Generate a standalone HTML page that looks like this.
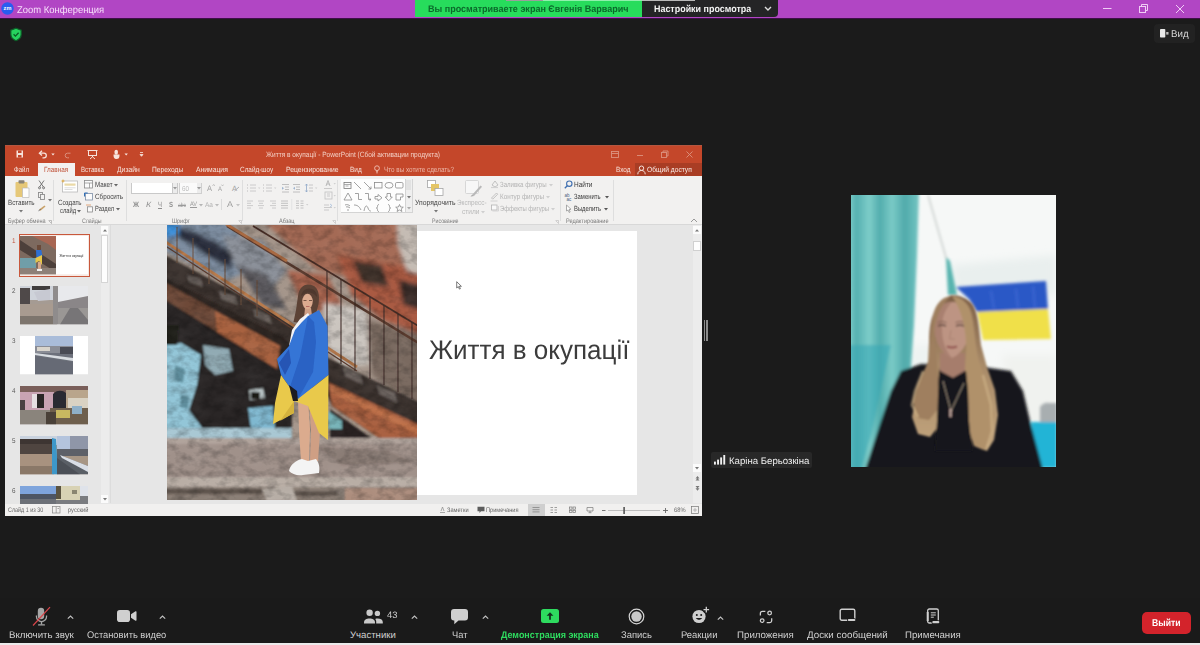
<!DOCTYPE html>
<html lang="ru"><head><meta charset="utf-8"><title>Zoom Конференция</title>
<style>
*{box-sizing:border-box;margin:0;padding:0}
html,body{width:1200px;height:645px;overflow:hidden;background:#1b1b1b;font-family:"Liberation Sans",sans-serif}
#root{position:relative;width:1200px;height:645px;overflow:hidden;background:#1b1b1b}
.a{position:absolute;display:block}
.x{position:absolute;white-space:nowrap;transform-origin:0 50%;text-rendering:geometricPrecision}
</style></head><body>
<div id="root">
<!-- p1_zoom -->
<div class="a" style="left:0px;top:0px;width:1200.0px;height:17.5px;background:#b146c4;"></div>
<div class="a" style="left:0px;top:17.5px;width:1200.0px;height:1.0px;background:#3d0f47;"></div>
<svg class="a" style="left:1px;top:2px;" width="13" height="13" viewBox="0 0 13 13"><circle cx="6.5" cy="6.5" r="6.2" fill="#2a5cf0"/><text x="6.5" y="8.4" font-size="5.6" font-weight="bold" fill="#fff" text-anchor="middle" font-family="Liberation Sans, sans-serif">zm</text></svg>
<div class="x" style="left:17.3px;top:5px;font-size:10px;line-height:12.0px;color:#f7dffb;transform:scaleX(0.943);">Zoom Конференция</div>
<svg class="a" style="left:1095px;top:0px;" width="100" height="18" viewBox="0 0 100 18"><g fill="none" stroke="#f0cdf6" stroke-width="1"><path d="M8 8.5h8.5"/><rect x="44.5" y="6.5" width="6" height="6"/><path d="M46.5 6.5v-2h6v6h-2"/><path d="M81 5l8 8M89 5l-8 8"/></g></svg>
<div class="a" style="left:415px;top:0px;width:227.0px;height:16.6px;background:#27dc5c;"></div>
<div class="a" style="left:506px;top:0px;width:37.0px;height:1.0px;background:#9a9f9c;"></div>
<div class="a" style="left:543px;top:0px;width:99.0px;height:1.0px;background:#8ff0ac;"></div>
<div class="x" style="left:428.3px;top:4px;font-size:9.6px;line-height:11.5px;color:#0b6a2b;transform:scaleX(0.940);font-weight:bold;">Вы просматриваете экран Євгенія Варварич</div>
<div class="a" style="left:642px;top:0px;width:136.0px;height:16.5px;background:#242426;border-radius:0 0 4px 0;"></div>
<div class="a" style="left:642px;top:0px;width:53.0px;height:1.0px;background:#b9b9b9;"></div>
<div class="x" style="left:654.0px;top:4px;font-size:9.6px;line-height:11.5px;color:#f4f4f4;transform:scaleX(0.930);font-weight:bold;">Настройки просмотра</div>
<svg class="a" style="left:764px;top:6px;" width="8" height="6" viewBox="0 0 8 6"><path d="M1 1l3 3 3-3" fill="none" stroke="#ddd" stroke-width="1.4"/></svg>
<svg class="a" style="left:8.5px;top:26.5px;" width="14" height="15" viewBox="0 0 14 15"><path d="M7 1.2 L12.2 3.2 V7.2 C12.2 10.3 10 12.5 7 13.7 C4 12.5 1.8 10.3 1.8 7.2 V3.2 Z" fill="#26d25e" stroke="#0f5d29" stroke-width="1.2"/><path d="M4.6 7.3l1.8 1.8 3.2-3.4" fill="none" stroke="#0c5a26" stroke-width="1.3"/></svg>
<div class="a" style="left:1154px;top:24px;width:41.0px;height:19.0px;background:#222222;border-radius:4px;"></div>
<svg class="a" style="left:1160px;top:29px;" width="10" height="9" viewBox="0 0 10 9"><rect x="0" y="0" width="5.3" height="8.5" rx="0.8" fill="#e8e8e8"/><rect x="6.2" y="3" width="2.3" height="2.6" fill="#bdbdbd"/></svg>
<div class="x" style="left:1171.0px;top:29px;font-size:9.8px;line-height:11.8px;color:#dadada;transform:scaleX(0.992);">Вид</div>
<div class="a" style="left:704px;top:320px;width:1.3px;height:21.0px;background:#8c8c8c;"></div>
<div class="a" style="left:706.3px;top:320px;width:1.3px;height:21.0px;background:#8c8c8c;"></div>
<div class="a" style="left:711.3px;top:452px;width:100.7px;height:16.3px;background:#282828;border-radius:2px;"></div>
<svg class="a" style="left:713.8px;top:455px;" width="12" height="10" viewBox="0 0 12 10"><g fill="#f0f0f0"><rect x="0" y="6.6" width="1.9" height="3"/><rect x="3.1" y="4.6" width="1.9" height="5"/><rect x="6.2" y="2.4" width="1.9" height="7.2"/><rect x="9.3" y="0" width="1.9" height="9.6"/></g></svg>
<div class="x" style="left:729.3px;top:456px;font-size:9.6px;line-height:11.5px;color:#efefef;transform:scaleX(1.002);">Каріна Берьозкіна</div>
<!-- p2_ppt -->
<div class="a" style="left:5px;top:145px;width:697.0px;height:371.0px;background:#e6e6e6;"></div>
<div class="a" style="left:5px;top:145px;width:697.0px;height:31.0px;background:#c4472a;"></div>
<div class="a" style="left:5px;top:145px;width:697.0px;height:1.0px;background:#b5563f;"></div>
<svg class="a" style="left:15px;top:149px;" width="130" height="11" viewBox="0 0 130 11"><g fill="none" stroke="#f7e3dc" stroke-width="1"><rect x="1.5" y="1.5" width="6.5" height="7" fill="#f7e3dc" stroke="none"/><rect x="3" y="1.5" width="3.5" height="2.5" fill="#c4472a" stroke="none"/><rect x="3" y="6" width="3.5" height="2.5" fill="#c4472a" stroke="none"/><path d="M25 4.2h4a2.2 2.2 0 0 1 0 4.6h-1.5" stroke-width="1.3"/><path d="M27 1.8L24.4 4.2 27 6.6" stroke-width="1.3"/><path d="M55.500 4.200h-3a2.200 2.200 0 0 0 0 4.600h1.500" stroke="#db8f7c"/><rect x="73.5" y="1.5" width="8" height="5"/><path d="M72.5 1.5h10M77.5 6.5v1.5M75 10l2.5-2.2L80 10"/><rect x="99.5" y="0.8" width="3.4" height="5" rx="1.7" fill="#f7e3dc" stroke="none"/><path d="M98.5 5.5c0 3.5 1 4.5 3 4.5s3-1 3-3.5v-1z" fill="#f7e3dc" stroke="none"/></g><path d="M36.300 4.500h3.400l-1.700 1.900zM109.500 4.500h3.400l-1.700 1.900z" fill="#f7e3dc"/><path d="M125 3.5h3M125 5.5h3l-1.5 1.8z" stroke="#f7e3dc" stroke-width="0.8" fill="#f7e3dc"/></svg>
<div class="x" style="left:266.0px;top:150px;font-size:7.5px;line-height:9.0px;color:#f3cfc4;transform:scaleX(0.873);">Життя в окупації - PowerPoint (Сбой активации продукта)</div>
<svg class="a" style="left:608px;top:149px;" width="90" height="11" viewBox="0 0 90 11"><g fill="none" stroke="#dc937f" stroke-width="0.9"><rect x="3.5" y="2.5" width="7" height="6"/><path d="M3.5 4.5h7"/><path d="M29 6.5h6"/><rect x="53.5" y="3.5" width="5" height="5"/><path d="M55 3.5V2h5v5h-1.5"/><path d="M78.5 2.5l6 6M84.5 2.5l-6 6"/></g></svg>
<div class="x" style="left:13.5px;top:165px;font-size:7.5px;line-height:9.0px;color:#f7e3dc;transform:scaleX(0.813);">Файл</div>
<div class="a" style="left:38.4px;top:163px;width:36.2px;height:13.5px;background:#f3f1f0;"></div>
<div class="x" style="left:44.4px;top:165px;font-size:7.5px;line-height:9.0px;color:#c0533a;transform:scaleX(0.848);">Главная</div>
<div class="x" style="left:81.0px;top:165px;font-size:7.5px;line-height:9.0px;color:#f7e3dc;transform:scaleX(0.818);">Вставка</div>
<div class="x" style="left:117.0px;top:165px;font-size:7.5px;line-height:9.0px;color:#f7e3dc;transform:scaleX(0.904);">Дизайн</div>
<div class="x" style="left:152.0px;top:165px;font-size:7.5px;line-height:9.0px;color:#f7e3dc;transform:scaleX(0.887);">Переходы</div>
<div class="x" style="left:196.0px;top:165px;font-size:7.5px;line-height:9.0px;color:#f7e3dc;transform:scaleX(0.903);">Анимация</div>
<div class="x" style="left:240.0px;top:165px;font-size:7.5px;line-height:9.0px;color:#f7e3dc;transform:scaleX(0.854);">Слайд-шоу</div>
<div class="x" style="left:285.5px;top:165px;font-size:7.5px;line-height:9.0px;color:#f7e3dc;transform:scaleX(0.906);">Рецензирование</div>
<div class="x" style="left:349.5px;top:165px;font-size:7.5px;line-height:9.0px;color:#f7e3dc;transform:scaleX(0.862);">Вид</div>
<svg class="a" style="left:374px;top:164.5px;" width="6" height="10" viewBox="0 0 6 10"><circle cx="3" cy="3.2" r="2.4" fill="none" stroke="#f0c2b5" stroke-width="0.9"/><path d="M2 6.3h2M2.2 7.8h1.6" stroke="#f0c2b5" stroke-width="0.9"/></svg>
<div class="x" style="left:383.6px;top:165px;font-size:7.5px;line-height:9.0px;color:#ecb5a6;transform:scaleX(0.844);">Что вы хотите сделать?</div>
<div class="x" style="left:616.0px;top:165px;font-size:7.5px;line-height:9.0px;color:#f7e3dc;transform:scaleX(0.855);">Вход</div>
<div class="a" style="left:635px;top:163px;width:67.0px;height:13.0px;background:#a93d24;"></div>
<svg class="a" style="left:637px;top:164.5px;" width="10" height="10" viewBox="0 0 10 10"><circle cx="4.5" cy="3.2" r="2.2" fill="none" stroke="#f7e3dc" stroke-width="1"/><path d="M0.8 9.3c0-2.6 1.6-3.8 3.7-3.8s3.7 1.2 3.7 3.8" fill="none" stroke="#f7e3dc" stroke-width="1"/></svg>
<div class="x" style="left:647.0px;top:165px;font-size:7.5px;line-height:9.0px;color:#fbeee9;transform:scaleX(0.889);">Общий доступ</div>
<div class="a" style="left:5px;top:176px;width:697.0px;height:48.4px;background:#f2f1f0;"></div>
<div class="a" style="left:5px;top:224.4px;width:697.0px;height:0.8px;background:#d8d8d8;"></div>
<div class="a" style="left:52.5px;top:180px;width:0.7px;height:41.0px;background:#dedede;"></div>
<div class="a" style="left:126px;top:180px;width:0.7px;height:41.0px;background:#dedede;"></div>
<div class="a" style="left:242px;top:180px;width:0.7px;height:41.0px;background:#dedede;"></div>
<div class="a" style="left:337px;top:180px;width:0.7px;height:41.0px;background:#dedede;"></div>
<div class="a" style="left:560px;top:180px;width:0.7px;height:41.0px;background:#dedede;"></div>
<div class="a" style="left:613px;top:180px;width:0.7px;height:41.0px;background:#dedede;"></div>
<svg class="a" style="left:14px;top:178.5px;" width="18" height="20" viewBox="0 0 18 20"><rect x="1.5" y="3" width="12" height="15" rx="1" fill="#e6c878"/><rect x="4.5" y="1.2" width="6" height="3.2" rx="0.8" fill="#8a8478"/><path d="M8.5 9h6.5v9.5H8.5z" fill="#fdfdfd" stroke="#b9b9b9" stroke-width="0.7"/></svg>
<div class="x" style="left:8.0px;top:198px;font-size:7.5px;line-height:9.0px;color:#444444;transform:scaleX(0.834);">Вставить</div>
<svg class="a" style="left:19.3px;top:209.5px;" width="4" height="3" viewBox="0 0 4 3"><path d="M0 0h4L2 2.4z" fill="#777"/></svg>
<svg class="a" style="left:37px;top:179px;" width="10" height="34" viewBox="0 0 10 34"><g fill="none" stroke="#6a6a6a" stroke-width="0.9"><path d="M2 1.5l4.5 6.5M7 1.5L2.5 8"/><circle cx="2.5" cy="8.8" r="1"/><circle cx="6.6" cy="8.8" r="1"/><rect x="1.5" y="13.5" width="4" height="5" stroke="#8d8d8d"/><rect x="3.5" y="15.5" width="4" height="5" fill="#f2f1f0" stroke="#8d8d8d"/></g><path d="M2 30.5l5.5-4 1 1-5 4.2z" fill="#c9a26b"/><path d="M1.5 31.8l2.3-1.5" stroke="#777" stroke-width="1"/></svg>
<svg class="a" style="left:47.5px;top:198.5px;" width="4" height="3" viewBox="0 0 4 3"><path d="M0 0h4L2 2.4z" fill="#777"/></svg>
<div class="x" style="left:7.5px;top:218px;font-size:6.4px;line-height:7.7px;color:#7a7a7a;transform:scaleX(0.866);">Буфер обмена</div>
<svg class="a" style="left:47.5px;top:219.5px;" width="4" height="4" viewBox="0 0 4 4"><path d="M0.5 0.5h3v3M3.5 3.5L1 1" fill="none" stroke="#999" stroke-width="0.6"/></svg>
<svg class="a" style="left:61px;top:179px;" width="18" height="14" viewBox="0 0 18 14"><rect x="1.5" y="2" width="15" height="11" fill="#fff" stroke="#b8b8b8" stroke-width="0.8"/><rect x="3.5" y="4.5" width="11" height="2.2" fill="#ead9a6"/><path d="M3.5 8.8h11M3.5 10.5h8" stroke="#cfcfcf" stroke-width="0.7"/><path d="M2 0.5v3M0.5 2h3" stroke="#e1a83a" stroke-width="0.9"/></svg>
<div class="x" style="left:58.0px;top:198px;font-size:7.5px;line-height:9.0px;color:#444444;transform:scaleX(0.824);">Создать</div>
<div class="x" style="left:59.5px;top:206px;font-size:7.5px;line-height:9.0px;color:#444444;transform:scaleX(0.767);">слайд</div>
<svg class="a" style="left:77px;top:209.8px;" width="4" height="3" viewBox="0 0 4 3"><path d="M0 0h4L2 2.4z" fill="#666"/></svg>
<svg class="a" style="left:84px;top:179.5px;" width="9" height="9" viewBox="0 0 9 9"><rect x="0.5" y="0.5" width="8" height="7.5" fill="#fbfbfb" stroke="#8b8b8b" stroke-width="0.8"/><path d="M0.5 3h8M5.5 3v5" stroke="#8b8b8b" stroke-width="0.7"/></svg>
<div class="x" style="left:94.5px;top:180px;font-size:7.5px;line-height:9.0px;color:#444444;transform:scaleX(0.824);">Макет</div>
<svg class="a" style="left:114px;top:183.5px;" width="4" height="3" viewBox="0 0 4 3"><path d="M0 0h4L2 2.4z" fill="#666"/></svg>
<svg class="a" style="left:84px;top:191.5px;" width="9" height="9" viewBox="0 0 9 9"><rect x="1.5" y="1.5" width="7" height="6.5" fill="#fbfbfb" stroke="#7d8ea6" stroke-width="0.8"/><path d="M0.5 4.5V1h3.2" fill="none" stroke="#2f6fb8" stroke-width="1"/></svg>
<div class="x" style="left:94.5px;top:192px;font-size:7.5px;line-height:9.0px;color:#444444;transform:scaleX(0.840);">Сбросить</div>
<svg class="a" style="left:86px;top:203.5px;" width="8" height="9" viewBox="0 0 8 9"><path d="M0 1h5" stroke="#e0a070" stroke-width="0.9"/><rect x="1.5" y="2.8" width="5" height="5.2" fill="#fbfbfb" stroke="#8b8b8b" stroke-width="0.8"/></svg>
<div class="x" style="left:94.5px;top:204px;font-size:7.5px;line-height:9.0px;color:#444444;transform:scaleX(0.766);">Раздел</div>
<svg class="a" style="left:116px;top:207.6px;" width="4" height="3" viewBox="0 0 4 3"><path d="M0 0h4L2 2.4z" fill="#666"/></svg>
<div class="x" style="left:82.0px;top:218px;font-size:6.4px;line-height:7.7px;color:#7a7a7a;transform:scaleX(0.822);">Слайды</div>
<div class="a" style="left:131px;top:182.5px;width:46.5px;height:11.0px;background:#c9c9c9;"></div>
<div class="a" style="left:131.7px;top:183.2px;width:40.8px;height:9.6px;background:#ffffff;"></div>
<div class="a" style="left:172.5px;top:183.2px;width:4.3px;height:9.6px;background:#ececec;"></div>
<svg class="a" style="left:173px;top:187px;" width="4" height="3" viewBox="0 0 4 3"><path d="M0 0h4L2 2.4z" fill="#9a9a9a"/></svg>
<div class="a" style="left:179px;top:182.5px;width:22.5px;height:11.0px;background:#cfcfcf;"></div>
<div class="a" style="left:179.7px;top:183.2px;width:17.3px;height:9.6px;background:#fafafa;"></div>
<div class="a" style="left:197px;top:183.2px;width:3.8px;height:9.6px;background:#ececec;"></div>
<svg class="a" style="left:197.2px;top:187px;" width="4" height="3" viewBox="0 0 4 3"><path d="M0 0h4L2 2.4z" fill="#9a9a9a"/></svg>
<div class="x" style="left:181.5px;top:186px;font-size:7px;line-height:8.4px;color:#bdbdbd;transform:scaleX(0.899);">60</div>
<div class="x" style="left:206.5px;top:184px;font-size:8px;line-height:9.6px;color:#a3a3a3;transform:scaleX(0.937);">A</div>
<div class="x" style="left:217.5px;top:186px;font-size:6.6px;line-height:7.9px;color:#a3a3a3;transform:scaleX(0.905);">A</div>
<svg class="a" style="left:211.5px;top:183px;" width="12" height="5" viewBox="0 0 12 5"><path d="M0.5 3l1.2-1.6L2.9 3M9.5 1.6l1 1.4 1-1.4" fill="none" stroke="#a8a8a8" stroke-width="0.6"/></svg>
<div class="x" style="left:232.0px;top:184px;font-size:7.5px;line-height:9.0px;color:#a3a3a3;transform:scaleX(1.000);">A</div>
<svg class="a" style="left:234px;top:186px;" width="6" height="6" viewBox="0 0 6 6"><path d="M0.5 5l4.5-4" stroke="#b0b0b0" stroke-width="1"/></svg>
<div class="x" style="left:133.0px;top:200px;font-size:7.5px;line-height:9.0px;color:#8f8f8f;transform:scaleX(0.885);font-weight:bold;">Ж</div>
<div class="x" style="left:145.5px;top:200px;font-size:7.5px;line-height:9.0px;color:#8f8f8f;transform:scaleX(1.144);font-style:italic;">К</div>
<div class="x" style="left:157.5px;top:200px;font-size:7.5px;line-height:9.0px;color:#8f8f8f;transform:scaleX(0.800);text-decoration:underline;">Ч</div>
<div class="x" style="left:168.5px;top:200px;font-size:7.5px;line-height:9.0px;color:#8f8f8f;transform:scaleX(0.800);font-weight:bold;">S</div>
<div class="x" style="left:177.5px;top:202px;font-size:6.2px;line-height:7.4px;color:#9a9a9a;transform:scaleX(0.794);text-decoration:line-through;">abc</div>
<div class="x" style="left:189.5px;top:201px;font-size:6.4px;line-height:7.7px;color:#9a9a9a;transform:scaleX(0.872);text-decoration:underline;">AV</div>
<svg class="a" style="left:198.5px;top:204px;" width="4" height="3" viewBox="0 0 4 3"><path d="M0 0h4L2 2.4z" fill="#b5b5b5"/></svg>
<div class="x" style="left:205.0px;top:202px;font-size:7px;line-height:8.4px;color:#b0b0b0;transform:scaleX(0.934);">Aa</div>
<svg class="a" style="left:215px;top:204px;" width="4" height="3" viewBox="0 0 4 3"><path d="M0 0h4L2 2.4z" fill="#bbb"/></svg>
<div class="a" style="left:221.3px;top:199px;width:0.7px;height:11.0px;background:#dadada;"></div>
<div class="x" style="left:226.5px;top:199px;font-size:8.5px;line-height:10.2px;color:#9c9c9c;transform:scaleX(1.058);">A</div>
<svg class="a" style="left:236px;top:204px;" width="4" height="3" viewBox="0 0 4 3"><path d="M0 0h4L2 2.4z" fill="#c4c4c4"/></svg>
<div class="x" style="left:172.0px;top:218px;font-size:6.4px;line-height:7.7px;color:#7a7a7a;transform:scaleX(0.858);">Шрифт</div>
<svg class="a" style="left:237.5px;top:219.5px;" width="4" height="4" viewBox="0 0 4 4"><path d="M0.5 0.5h3v3M3.5 3.5L1 1" fill="none" stroke="#bbb" stroke-width="0.6"/></svg>
<svg class="a" style="left:245px;top:180px;" width="76" height="32" viewBox="0 0 76 32"><g fill="none" stroke="#c2c2c2" stroke-width="0.8"><path d="M5 5h6M5 8h6M5 11h6"/><path d="M2 5h1M2 8h1M2 11h1" stroke="#b0b0b0"/><path d="M21 5h6M21 8h6M21 11h6"/><path d="M18 5h1M18 8h1M18 11h1" stroke="#b0b0b0"/><path d="M13 7.5h2.4l-1.2 1.4zM29 7.5h2.4l-1.2 1.4z" fill="#cfcfcf" stroke="none"/><path d="M37 4.5h7M40 7h4M40 9.500h4M37 12h7" stroke="#b3b3b3"/><path d="M39 8.3l-2-1.5v3z" fill="#9fb4cf" stroke="none"/><path d="M48 4.5h7M51 7h4M51 9.500h4M48 12h7" stroke="#b3b3b3"/><path d="M48 8.3l2-1.500v3z" fill="#9fb4cf" stroke="none"/><path d="M64 5h4M64 8h4M64 11h4" stroke="#bdbdbd"/><path d="M61.500 4v8M60.300 5.500l1.200-1.500 1.200 1.500M60.300 10.500l1.200 1.500 1.200-1.500" stroke="#8fa8c8"/><path d="M70 7.500h2.400l-1.200 1.400z" fill="#cfcfcf" stroke="none"/><path d="M2 21h6M2 23.300h4M2 25.600h6M2 28h4"/><path d="M13 21h6M14 23.300h4M13 25.600h6M14 28h4"/><path d="M25 21h6M27 23.300h4M25 25.600h6M27 28h4"/><path d="M36 21h7M36 23.300h7M36 25.600h7M36 28h7" stroke="#b5b5b5"/><path d="M51 21h3M51 23.300h3M51 25.600h3M51 28h3M55.500 21h3M55.500 23.300h3M55.500 25.600h3M55.500 28h3" stroke="#b8b8b8"/><path d="M61 24h2.400l-1.200 1.400z" fill="#cfcfcf" stroke="none"/></g><path d="M46.700 19v11" stroke="#dcdcdc" stroke-width="0.7"/></svg>
<svg class="a" style="left:323px;top:179px;" width="14" height="34" viewBox="0 0 14 34"><g fill="none" stroke="#c0c0c0" stroke-width="0.8"><path d="M3 7l2-5.500L7 7M3.700 5h2.600" stroke="#adadad"/><path d="M1 9.500h8"/><rect x="2" y="13" width="7" height="7"/><path d="M4 15h3M4 17h3"/><path d="M1 26h5M1 28.500h8M1 31h5"/><path d="M7 25l2 1.500-2 1.500" stroke="#aac0dc"/></g><path d="M10.500 4h2.400l-1.200 1.400zM10.500 16h2.400l-1.200 1.400zM10.500 28h2.400l-1.200 1.400z" fill="#cfcfcf"/></svg>
<div class="x" style="left:279.0px;top:218px;font-size:6.4px;line-height:7.7px;color:#7a7a7a;transform:scaleX(0.867);">Абзац</div>
<svg class="a" style="left:331.5px;top:219.5px;" width="4" height="4" viewBox="0 0 4 4"><path d="M0.500 0.500h3v3M3.500 3.500L1 1" fill="none" stroke="#bbb" stroke-width="0.600"/></svg>
<div class="a" style="left:340.5px;top:178.5px;width:72.0px;height:34.5px;background:#d4d4d4;"></div>
<div class="a" style="left:341.2px;top:179.2px;width:64.3px;height:33.1px;background:#fdfdfd;"></div>
<div class="a" style="left:405.5px;top:179.2px;width:6.3px;height:33.1px;background:#efefef;"></div>
<div class="a" style="left:406px;top:180px;width:5.3px;height:10.0px;background:#e2e2e2;"></div>
<svg class="a" style="left:341.5px;top:179.5px;" width="64" height="33" viewBox="0 0 64 33"><g fill="none" stroke="#8a8a8a" stroke-width="0.800"><rect x="2" y="2.500" width="7" height="6" stroke="#7a7a7a"/><path d="M2 4.500h7M3.500 6h3" stroke="#9a9a9a"/><path d="M12 2l7 7"/><path d="M22 2l7 7M29 9v-2.500M29 9h-2.500"/><rect x="32.500" y="2.500" width="7.500" height="5.500"/><ellipse cx="47" cy="5.300" rx="4" ry="2.900"/><rect x="53.500" y="2.500" width="7.500" height="5.500" rx="1.200"/><path d="M2 20l4-7 4 7z"/><path d="M13 13.500h3.500v6H20"/><path d="M23 13.500h3.500v6H29M29 19.500l-1.500-1.200M29 19.500l-1.500 1.200"/><path d="M33 16.500h3v-2l4 3.300-4 3.200v-2h-3z"/><path d="M45 13.500h3.500v3.500h1.800l-3.600 3.800-3.500-3.800H45z"/><path d="M54 14h7v3h-2.500v3H54z"/><path d="M3 25c2-1 4 0 5 1M4 27c1-0.500 3 0 4 1M6 29v2"/><path d="M12 25c3 0 5 1 7 5"/><path d="M22 31c1-6 3-6 4-3s2 3 3 3"/><path d="M37 24.500c-1.200 0-1.500 0.800-1.500 2s-0.500 1.500-1.200 1.500c0.700 0 1.200 0.400 1.200 1.600s0.300 2 1.500 2"/><path d="M46 24.500c1.200 0 1.500 0.800 1.500 2s0.500 1.500 1.200 1.500c-0.700 0-1.200 0.400-1.200 1.600s-0.300 2-1.500 2"/><path d="M57.500 24.500l1.100 2.500 2.700 0.200-2.100 1.700 0.700 2.600-2.400-1.500-2.400 1.500 0.700-2.600-2.100-1.700 2.700-0.200z"/></g></svg>
<svg class="a" style="left:407px;top:195.5px;" width="4" height="3" viewBox="0 0 4 3"><path d="M0 0h4L2 2.4z" fill="#777"/></svg>
<svg class="a" style="left:407px;top:206.5px;" width="4" height="3" viewBox="0 0 4 3"><path d="M0 0h4L2 2.4z" fill="#aaa"/></svg>
<svg class="a" style="left:426px;top:179px;" width="18" height="18" viewBox="0 0 18 18"><rect x="1.500" y="1.500" width="8" height="7" fill="#fff" stroke="#a5a5a5" stroke-width="0.800"/><rect x="5" y="5" width="8" height="7" fill="#e4c566"/><rect x="9" y="9.500" width="8" height="7" fill="#fff" stroke="#a5a5a5" stroke-width="0.800"/></svg>
<div class="x" style="left:415.0px;top:198px;font-size:7.5px;line-height:9.0px;color:#444444;transform:scaleX(0.907);">Упорядочить</div>
<svg class="a" style="left:433.5px;top:210px;" width="4" height="3" viewBox="0 0 4 3"><path d="M0 0h4L2 2.4z" fill="#777"/></svg>
<svg class="a" style="left:464px;top:179px;" width="20" height="19" viewBox="0 0 20 19"><rect x="1.500" y="1.500" width="13" height="13" rx="1" fill="#f7f7f7" stroke="#cfcfcf" stroke-width="0.800"/><path d="M8 16l8.500-9.500 1.500 1.300L10 17z" fill="#b9b9b9"/><path d="M6.500 17.500l1.500-1.500 2 1z" fill="#9a9a9a"/></svg>
<div class="x" style="left:457.0px;top:198px;font-size:7.5px;line-height:9.0px;color:#b9b9b9;transform:scaleX(0.845);">Экспресс-</div>
<div class="x" style="left:461.5px;top:207px;font-size:7.5px;line-height:9.0px;color:#b9b9b9;transform:scaleX(0.878);">стили</div>
<svg class="a" style="left:481px;top:210.5px;" width="4" height="3" viewBox="0 0 4 3"><path d="M0 0h4L2 2.4z" fill="#cfcfcf"/></svg>
<svg class="a" style="left:490px;top:179px;" width="9" height="34" viewBox="0 0 9 34"><g fill="none" stroke="#b5b5b5" stroke-width="0.800"><path d="M2 6l3-4 3 4-3 2z"/><path d="M1 8.500h7" stroke="#d2d2d2" stroke-width="1.200"/><path d="M1.500 19l5-5 1.200 1.200-5 5z"/><path d="M0.500 22h7" stroke="#d2d2d2" stroke-width="1"/><rect x="1.500" y="26" width="5.500" height="5" fill="#f9f9f9"/><path d="M2.500 32h6v-5" stroke="#cfcfcf"/></g></svg>
<div class="x" style="left:500.0px;top:180px;font-size:7.5px;line-height:9.0px;color:#b3b3b3;transform:scaleX(0.812);">Заливка фигуры</div>
<svg class="a" style="left:548.5px;top:183.5px;" width="4" height="3" viewBox="0 0 4 3"><path d="M0 0h4L2 2.4z" fill="#cfcfcf"/></svg>
<div class="x" style="left:500.0px;top:192px;font-size:7.5px;line-height:9.0px;color:#b3b3b3;transform:scaleX(0.839);">Контур фигуры</div>
<svg class="a" style="left:546px;top:195.5px;" width="4" height="3" viewBox="0 0 4 3"><path d="M0 0h4L2 2.4z" fill="#cfcfcf"/></svg>
<div class="x" style="left:500.0px;top:204px;font-size:7.5px;line-height:9.0px;color:#b3b3b3;transform:scaleX(0.784);">Эффекты фигуры</div>
<svg class="a" style="left:551px;top:207.5px;" width="4" height="3" viewBox="0 0 4 3"><path d="M0 0h4L2 2.4z" fill="#cfcfcf"/></svg>
<div class="x" style="left:432.0px;top:218px;font-size:6.4px;line-height:7.7px;color:#7a7a7a;transform:scaleX(0.825);">Рисование</div>
<svg class="a" style="left:554.5px;top:219.5px;" width="4" height="4" viewBox="0 0 4 4"><path d="M0.500 0.500h3v3M3.500 3.500L1 1" fill="none" stroke="#bbb" stroke-width="0.600"/></svg>
<svg class="a" style="left:564px;top:179.5px;" width="9" height="9" viewBox="0 0 9 9"><circle cx="5.300" cy="3.700" r="2.700" fill="none" stroke="#3f6fb0" stroke-width="1.100"/><path d="M3.300 5.700L0.800 8.300" stroke="#3f6fb0" stroke-width="1.300"/></svg>
<div class="x" style="left:574.0px;top:180px;font-size:7.5px;line-height:9.0px;color:#3a3a3a;transform:scaleX(0.864);">Найти</div>
<svg class="a" style="left:564px;top:191.5px;" width="9" height="9" viewBox="0 0 9 9"><text x="0.500" y="4.500" font-size="4.500" fill="#4a5f80" font-family="Liberation Sans, sans-serif">ab</text><text x="2.500" y="9" font-size="4.500" fill="#4a5f80" font-family="Liberation Sans, sans-serif">ac</text></svg>
<div class="x" style="left:574.0px;top:192px;font-size:7.5px;line-height:9.0px;color:#3a3a3a;transform:scaleX(0.786);">Заменить</div>
<svg class="a" style="left:605px;top:195.6px;" width="4" height="3" viewBox="0 0 4 3"><path d="M0 0h4L2 2.4z" fill="#555"/></svg>
<svg class="a" style="left:564px;top:203.5px;" width="9" height="9" viewBox="0 0 9 9"><path d="M2.500 1l4.500 4.300-2 0.200 1.200 2.500-1 0.500-1.200-2.500L2.500 7z" fill="#fff" stroke="#8a8a8a" stroke-width="0.700"/></svg>
<div class="x" style="left:574.0px;top:204px;font-size:7.5px;line-height:9.0px;color:#3a3a3a;transform:scaleX(0.780);">Выделить</div>
<svg class="a" style="left:603.5px;top:207.6px;" width="4" height="3" viewBox="0 0 4 3"><path d="M0 0h4L2 2.4z" fill="#555"/></svg>
<div class="x" style="left:566.0px;top:218px;font-size:6.4px;line-height:7.7px;color:#7a7a7a;transform:scaleX(0.875);">Редактирование</div>
<svg class="a" style="left:690px;top:217.5px;" width="8" height="5" viewBox="0 0 8 5"><path d="M1 4l3-3 3 3" fill="none" stroke="#999" stroke-width="1"/></svg>
<div class="a" style="left:5px;top:503.5px;width:697.0px;height:12.5px;background:#f1f0ef;"></div>
<div class="x" style="left:8.0px;top:507px;font-size:6.6px;line-height:7.9px;color:#666;transform:scaleX(0.822);">Слайд 1 из 30</div>
<svg class="a" style="left:51.5px;top:505.5px;" width="9" height="8" viewBox="0 0 9 8"><rect x="0.500" y="0.500" width="7.500" height="6.500" fill="none" stroke="#888" stroke-width="0.700"/><path d="M4.200 0.500v6.500M5.500 2.500h1.500" stroke="#888" stroke-width="0.700"/></svg>
<div class="x" style="left:68.0px;top:507px;font-size:6.6px;line-height:7.9px;color:#666;transform:scaleX(0.862);">русский</div>
<svg class="a" style="left:439px;top:505.5px;" width="7" height="8" viewBox="0 0 7 8"><path d="M1 6.500h5M2 5l1.500-4 1.500 4" fill="none" stroke="#8a8a8a" stroke-width="0.700"/></svg>
<div class="x" style="left:447.0px;top:507px;font-size:6.4px;line-height:7.7px;color:#666;transform:scaleX(0.882);">Заметки</div>
<svg class="a" style="left:476.5px;top:505.5px;" width="8" height="8" viewBox="0 0 8 8"><path d="M0.500 0.800h7v4.500h-3.500l-1.500 1.800v-1.800h-2z" fill="#5c5c5c"/></svg>
<div class="x" style="left:486.0px;top:507px;font-size:6.4px;line-height:7.7px;color:#666;transform:scaleX(0.883);">Примечания</div>
<div class="a" style="left:527.5px;top:504px;width:17.5px;height:11.5px;background:#cfcfcf;"></div>
<svg class="a" style="left:531px;top:506px;" width="70" height="8" viewBox="0 0 70 8"><g fill="none" stroke="#7a7a7a" stroke-width="0.700"><path d="M1.500 1.500h7M1.500 3.700h7M1.500 5.900h7"/><path d="M19.500 1.500h2.500M23.500 1.500h2.500M19.500 4h2.500M23.500 4h2.500M19.500 6.500h2.500M23.500 6.500h2.500"/><rect x="38.500" y="1" width="2.500" height="2.200"/><rect x="42" y="1" width="2.500" height="2.200"/><rect x="38.500" y="4.300" width="2.500" height="2.200"/><rect x="42" y="4.300" width="2.500" height="2.200"/><path d="M56 1.500h6v3.500h-6zM59 5v1.700M57.500 6.700h3"/></g></svg>
<svg class="a" style="left:601px;top:505.5px;" width="70" height="9" viewBox="0 0 70 9"><path d="M1 4.500h3.500" stroke="#666" stroke-width="0.900"/><path d="M7 4.500h52" stroke="#9a9a9a" stroke-width="0.600"/><rect x="22.300" y="1" width="1.600" height="7" fill="#555"/><path d="M62 4.500h5M64.500 2v5" stroke="#666" stroke-width="0.900"/></svg>
<div class="x" style="left:674.0px;top:507px;font-size:6.4px;line-height:7.7px;color:#666;transform:scaleX(0.901);">68%</div>
<svg class="a" style="left:691px;top:505.5px;" width="8" height="8" viewBox="0 0 8 8"><rect x="0.500" y="0.500" width="7" height="7" fill="none" stroke="#777" stroke-width="0.700"/><path d="M2 4h4M4 2v4" stroke="#999" stroke-width="0.600"/></svg>
<div class="a" style="left:100.5px;top:225.5px;width:8.0px;height:277.5px;background:#ececec;"></div>
<div class="a" style="left:101px;top:226px;width:7.0px;height:8.0px;background:#fbfbfb;"></div>
<svg class="a" style="left:102.5px;top:228.5px;" width="4" height="3" viewBox="0 0 4 3"><path d="M0 2.600h4L2 0.200z" fill="#777"/></svg>
<div class="a" style="left:101px;top:234.5px;width:7.0px;height:48.0px;background:#fdfdfd;border:0.6px solid #d5d5d5;"></div>
<div class="a" style="left:101px;top:494.5px;width:7.0px;height:8.0px;background:#fbfbfb;"></div>
<svg class="a" style="left:102.5px;top:497.5px;" width="4" height="3" viewBox="0 0 4 3"><path d="M0 0h4L2 2.4z" fill="#777"/></svg>
<div class="a" style="left:110px;top:225px;width:0.8px;height:278.0px;background:#dcdcdc;"></div>
<div class="a" style="left:692.5px;top:225px;width:9.0px;height:278.0px;background:#ececec;"></div>
<div class="a" style="left:693px;top:226px;width:8.0px;height:7.5px;background:#fbfbfb;"></div>
<svg class="a" style="left:695px;top:228.5px;" width="4" height="3" viewBox="0 0 4 3"><path d="M0 2.600h4L2 0.200z" fill="#777"/></svg>
<div class="a" style="left:693px;top:241px;width:8.0px;height:9.5px;background:#fdfdfd;border:0.6px solid #d0d0d0;"></div>
<div class="a" style="left:693px;top:464px;width:8.0px;height:8.0px;background:#fbfbfb;"></div>
<svg class="a" style="left:695px;top:467px;" width="4" height="3" viewBox="0 0 4 3"><path d="M0 0h4L2 2.4z" fill="#777"/></svg>
<svg class="a" style="left:694.5px;top:474.5px;" width="5" height="17" viewBox="0 0 5 17"><path d="M0.500 3.500L2.500 1l2 2.500zM0.500 5.500L2.500 3.200l2 2.300z" fill="#777"/><path d="M0.500 11l2 2.500 2-2.500zM0.500 13.300l2 2.500 2-2.500z" fill="#777"/></svg>
<!-- p3_photo -->
<div class="a" style="left:167px;top:230.8px;width:470.3px;height:264.2px;background:#ffffff;"></div>
<svg class="a" style="left:167px;top:225.2px;" width="250" height="275" viewBox="0 0 250 275"><defs><filter id="b1" x="-5%" y="-5%" width="110%" height="110%"><feGaussianBlur stdDeviation="1.1"/></filter><filter id="b2" x="-5%" y="-5%" width="110%" height="110%"><feGaussianBlur stdDeviation="0.7"/></filter><filter id="b3" x="-5%" y="-5%" width="110%" height="110%"><feGaussianBlur stdDeviation="2.2"/></filter><filter id="nz" x="0" y="0" width="100%" height="100%"><feTurbulence type="fractalNoise" baseFrequency="0.09 0.13" numOctaves="3" seed="7"/><feColorMatrix type="matrix" values="0 0 0 0 0  0 0 0 0 0  0 0 0 0 0  1.6 0 0 0 -0.62"/></filter><filter id="nz2" x="0" y="0" width="100%" height="100%"><feTurbulence type="fractalNoise" baseFrequency="0.05 0.07" numOctaves="2" seed="3"/><feColorMatrix type="matrix" values="0 0 0 0 1  0 0 0 0 1  0 0 0 0 1  0 1.5 0 0 -0.62"/></filter><clipPath id="cp"><rect x="0" y="0" width="250" height="275"/></clipPath></defs><g clip-path="url(#cp)"><rect width="250" height="275" fill="#a4958a"/><g filter="url(#b3)"><path d="M95 -5H255V95L215 60 150 45z" fill="#a46a55"/><path d="M170 30L255 45V110L215 95 185 70z" fill="#a95a42"/><path d="M120 45L160 50 175 80 140 90z" fill="#a8644e"/><path d="M-5 -5H60L100 40 60 55 -5 25z" fill="#7d8da0"/><path d="M12 3L30 8 50 18 66 28 64 44 45 34 28 22 12 13z" fill="#2b2d3c"/><path d="M-3 -3H12V10L-3 14z" fill="#3d8fd8"/><path d="M55 10L95 15 120 45 100 70 70 45z" fill="#8a8f98"/><path d="M70 40L100 50 120 85 95 80z" fill="#5c5a5e"/><path d="M156 78L199 84 202 140 174 142 160 120z" fill="#cbc5bf"/><path d="M230 -3H255V50L240 46 231 20z" fill="#c4bbb3"/><path d="M200 95L255 110V185L205 150z" fill="#7a6a60"/><path d="M185 35L215 40 222 62 195 58z" fill="#40302a"/><path d="M232 55L255 60V85L236 80z" fill="#3d2f2a"/></g><g filter="url(#b1)"><path d="M-3 70L110 140 125 150V214H-3z" fill="#2c2826"/><path d="M-3 120L14 118 34 130 30 160 22 185 36 204 -3 206z" fill="#93c6d8"/><path d="M-3 100H12L10 120H-3z" fill="#1d1a19"/><path d="M8 140l10 4-2 14-9-3zM14 170l8 2-1 12-8-2z" fill="#5f8d9c"/><path d="M36 120L62 124 66 146 48 150 38 140z" fill="#8fa9b2"/><path d="M81 183L106 181 108 203 84 204z" fill="#7fb8d0"/><path d="M82 165l14-2 2 10-15 2z" fill="#b9c4c6"/><path d="M84 167h9v7h-9z" fill="#1d1a19"/><path d="M-3 203H125V214H-3z" fill="#a9c8d4"/><path d="M-3 30L121 95 161 133 253 178V230L231 226 165 181 161 172 110 144 -3 74z" fill="#2f2623"/><path d="M-3 30L121 95 161 133 253 178V200L161 157 115 112 -3 52z" fill="#3a312d"/><path d="M20 50l14 4 2 8-14-5zM52 66l16 5 3 9-17-6zM86 84l16 6 3 9-17-7zM176 142l18 8 2 10-18-9zM210 160l18 8 2 10-18-9z" fill="#6c645e"/><path d="M-3 57L113 121 110 144 -3 74z" fill="#6e4a38"/><path d="M48 86L113 121 110 144 50 107z" fill="#a8623f"/><path d="M161 157L253 200V228L231 226 165 181z" fill="#a9603f"/><path d="M163 160L253 204V210L165 168z" fill="#bd7048"/><path d="M163 184L220 224 163 224z" fill="#2c2421"/><path d="M161 186L175 196V204H161z" fill="#77b3b8"/><path d="M-3 213H253V253H-3z" fill="#a0918a"/><path d="M-3 213H253V219H-3z" fill="#b0a39b"/><path d="M150 222L222 226 246 238 175 240z" fill="#8a7c75"/><path d="M-3 252H253V263H-3z" fill="#b9aea5"/><path d="M-3 262H253V278H-3z" fill="#8a7e74"/><path d="M-3 264H95V269H-3zM110 266H170V271H110zM185 268H215V274H185z" fill="#5e554e"/><path d="M95 264L125 261 130 276H100z" fill="#b7aea6"/><path d="M178 263H253V278H178z" fill="#ad8e7e"/></g><g filter="url(#b2)" fill="none"><path d="M86 1L253 102" stroke="#4a2f27" stroke-width="1.8"/><path d="M60 1L253 119" stroke="#5a3a2e" stroke-width="2.6"/><path d="M59 -1L120 36" stroke="#a8683f" stroke-width="2.8"/><path d="M-3 16L190 142" stroke="#b87a4c" stroke-width="2.8"/><path d="M-3 20L190 146" stroke="#5e3d2f" stroke-width="1.2"/><path d="M160 46V132" stroke="#3f2c26" stroke-width="1.1"/><path d="M174 54V139" stroke="#3f2c26" stroke-width="1.1"/><path d="M188 63V146" stroke="#3f2c26" stroke-width="1.1"/><path d="M203 72V154" stroke="#3f2c26" stroke-width="1.1"/><path d="M217 80V160" stroke="#3f2c26" stroke-width="1.1"/><path d="M231 89V167" stroke="#3f2c26" stroke-width="1.1"/><path d="M245 97V174" stroke="#3f2c26" stroke-width="1.1"/><path d="M10 2V38" stroke="#6a4a3a" stroke-width="1"/><path d="M26 13V49" stroke="#6a4a3a" stroke-width="1"/><path d="M42 23V59" stroke="#6a4a3a" stroke-width="1"/><path d="M58 34V70" stroke="#6a4a3a" stroke-width="1"/><path d="M74 44V80" stroke="#6a4a3a" stroke-width="1"/><path d="M90 55V91" stroke="#6a4a3a" stroke-width="1"/></g><rect width="250" height="275" filter="url(#nz)" opacity="0.3"/><rect width="250" height="275" filter="url(#nz2)" opacity="0.06"/><g filter="url(#b2)"><path d="M131 174h10l2 30-1 32h-8l-2-30z" fill="#dbab8e"/><path d="M142 176h10l1 30-2 30h-8l1-30z" fill="#cf9f84"/><path d="M141 59.500c-5 0-9 4-10 11.500l-2 14-2.500 12 7 1 6-8 7 1 3-4 2-8c1-6 0.500-12-2-15.500-2-3-5-4-8.500-4z" fill="#5c4236"/><path d="M138 83h6l1 8-8 2z" fill="#cf9f86"/><ellipse cx="140.500" cy="76.500" rx="5.200" ry="7.800" fill="#dcab90"/><path d="M134 71c1-6 6-9 11-7 3 1 5 4 5 8-3-4-8-6-13-3z" fill="#4f382d"/><path d="M136.500 75.500h3M142 75.500h3" stroke="#6a4a3c" stroke-width="0.900"/><path d="M139 81.500h3.500" stroke="#b56a60" stroke-width="1"/><path d="M141 88l-8 6-8 11-3 16 6-9 15-21z" fill="#f3f3f5"/><path d="M141 91l11-6 8.500 16 1 49-30.500 24-17-24-4-16 12-13 6-16 7-8z" fill="#3474d6"/><path d="M141 91l6 6 2 20-3 30-15 27-8-12 10-30z" fill="#2a62c4"/><path d="M112 138l10-14 2 14-6 12z" fill="#2554b4"/><path d="M114 150l17 24 30.500-24-0.500 65-9-7-11-27-14-5v12l-21 11 2-21z" fill="#e9c94c"/><path d="M127 176v12l-14 8z" fill="#d4b23e"/><path d="M122 160l8 6 1 10h-5z" fill="#1d1b20"/><path d="M122 246c1-6 7-11 13-12l6 2 8-2c3 4 4 8 3 14l-16 2c-6 1-11-1-14-4z" fill="#f4f4f4"/></g></g></svg>
<div class="x" style="left:428.8px;top:334px;font-size:27px;line-height:32.4px;color:#3c3c3c;transform:scaleX(0.964);">Життя в окупації</div>
<svg class="a" style="left:456px;top:281px;" width="6" height="9" viewBox="0 0 6 9"><path d="M0.7 0.7v6.3l1.6-1.4 1.1 2.5 1-0.400-1.100-2.400h2.100z" fill="#fff" stroke="#444" stroke-width="0.700"/></svg>
<div class="x" style="left:12.0px;top:238px;font-size:7px;line-height:8.4px;color:#c0533a;transform:scaleX(0.899);">1</div>
<div class="a" style="left:18.5px;top:234px;width:71.5px;height:42.5px;background:#f7e9e4;border:1.3px solid #c8583c;"></div>
<svg class="a" style="left:20px;top:236px;" width="68" height="38.5" viewBox="0 0 68 38.5"><defs><filter id="tb1"><feGaussianBlur stdDeviation="0.7"/></filter><clipPath id="tc1"><rect width="68" height="38.5"/></clipPath></defs><g clip-path="url(#tc1)"><g filter="url(#tb1)"><rect width="68" height="38.5" fill="#fff"/><rect width="36" height="38.5" fill="#7d6a5f"/><path d="M12 0H36V14L28 8z" fill="#a86652"/><path d="M0 4L36 28V36L0 14z" fill="#4d403a"/><path d="M0 22H16V32H0z" fill="#6f9ea8"/><path d="M0 32H36V38.500H0z" fill="#8d8078"/><path d="M16 14l5-1.500 1.500 8-6 3z" fill="#2f6fd3"/><path d="M15.500 22l6.500-3v10l-3-4-3.500 2z" fill="#e6c648"/><path d="M18 26h3v8h-3z" fill="#d6a88c"/><path d="M17 33h5v2h-5z" fill="#f0f0f0"/><path d="M17 9h4v5h-4z" fill="#6a4838"/><text x="39.500" y="20.800" font-size="3.400" fill="#222" font-family="Liberation Sans, sans-serif" textLength="24" lengthAdjust="spacingAndGlyphs">Життя в окупації</text></g></g></svg>
<div class="x" style="left:12.0px;top:288px;font-size:7px;line-height:8.4px;color:#5a5a5a;transform:scaleX(0.899);">2</div>
<svg class="a" style="left:20px;top:286px;" width="68" height="38.5" viewBox="0 0 68 38.5"><defs><filter id="tb2"><feGaussianBlur stdDeviation="0.7"/></filter><clipPath id="tc2"><rect width="68" height="38.5"/></clipPath></defs><g clip-path="url(#tc2)"><g filter="url(#tb2)"><rect width="68" height="38.5" fill="#a59b93"/><rect width="37" height="14" fill="#cfd3da"/><path d="M0 2H10V18H0z" fill="#4f4a48"/><path d="M12 0H30V4H12z" fill="#3f3c3c"/><path d="M14 6L30 3V14L18 15z" fill="#c7c9d2"/><path d="M0 18H37V38.500H0z" fill="#a89b90"/><path d="M0 30H37V38.500H0z" fill="#7d746d"/><rect x="37" width="31" height="38.5" fill="#e8e9ec"/><path d="M33 0H38V38.500H33z" fill="#8f8c8c"/><path d="M38 16L68 10V24L38 24z" fill="#8a8688"/><path d="M38 22H68V38.500H38z" fill="#9a9795"/><path d="M40 38.500L50 22H58L68 34V38.500z" fill="#777577"/></g></g></svg>
<div class="x" style="left:12.0px;top:338px;font-size:7px;line-height:8.4px;color:#5a5a5a;transform:scaleX(0.899);">3</div>
<svg class="a" style="left:20px;top:336px;" width="68" height="38.5" viewBox="0 0 68 38.5"><defs><filter id="tb3"><feGaussianBlur stdDeviation="0.7"/></filter><clipPath id="tc3"><rect width="68" height="38.5"/></clipPath></defs><g clip-path="url(#tc3)"><g filter="url(#tb3)"><rect width="68" height="38.5" fill="#fff"/><rect x="15" width="38" height="38.5" fill="#6d717b"/><rect x="15" width="38" height="13" fill="#a9bcd9"/><path d="M15 10H53V17H15z" fill="#8a8d96"/><path d="M17 11H30V15H17z" fill="#d8d4cc"/><path d="M15 17L53 22V25L15 19z" fill="#d9dde2"/><path d="M15 20L53 26V38.500H15z" fill="#666a74"/><path d="M40 11h13v7H40z" fill="#4a4c55"/></g></g></svg>
<div class="x" style="left:12.0px;top:388px;font-size:7px;line-height:8.4px;color:#5a5a5a;transform:scaleX(0.899);">4</div>
<svg class="a" style="left:20px;top:386px;" width="68" height="38.5" viewBox="0 0 68 38.5"><defs><filter id="tb4"><feGaussianBlur stdDeviation="0.7"/></filter><clipPath id="tc4"><rect width="68" height="38.5"/></clipPath></defs><g clip-path="url(#tc4)"><g filter="url(#tb4)"><rect width="68" height="38.5" fill="#8f7f78"/><path d="M0 0H68V7H0z" fill="#7a5f5a"/><path d="M0 6H34V24H0z" fill="#c9a3b3"/><path d="M17 8h7v14h-7z" fill="#2a2628"/><path d="M12 8h5v14h-5z" fill="#e6dfe2"/><path d="M0 14h5v10H0z" fill="#4a3f42"/><path d="M0 24H30V38.500H0z" fill="#8a847c"/><path d="M33 8a9 9 0 0 1 14 0v14H33z" fill="#2b2a30"/><path d="M46 4H68V22H46z" fill="#b9a58c"/><path d="M48 12H68V24H48z" fill="#d9d2c3"/><path d="M30 22H68V38.500H30z" fill="#6e5f4e"/><path d="M36 24h14v8H36z" fill="#c8b860"/><path d="M52 20h10v8H52z" fill="#8fb0c8"/><path d="M26 26h10v12.500H26z" fill="#4a3f38"/></g></g></svg>
<div class="x" style="left:12.0px;top:438px;font-size:7px;line-height:8.4px;color:#5a5a5a;transform:scaleX(0.899);">5</div>
<svg class="a" style="left:20px;top:436px;" width="68" height="38.5" viewBox="0 0 68 38.5"><defs><filter id="tb5"><feGaussianBlur stdDeviation="0.7"/></filter><clipPath id="tc5"><rect width="68" height="38.5"/></clipPath></defs><g clip-path="url(#tc5)"><g filter="url(#tb5)"><rect width="68" height="38.5" fill="#a79685"/><rect width="68" height="9" fill="#c9d2de"/><path d="M0 5H32V20H0z" fill="#4f4540"/><path d="M0 3H32V8H0z" fill="#3c3633"/><path d="M0 18H34V38.500H0z" fill="#a8927f"/><path d="M0 30H34V38.500H0z" fill="#8a7868"/><path d="M32 2l4 1 2 35.500h-6z" fill="#3d97c9"/><rect x="37" width="31" height="14" fill="#b4c4dd"/><path d="M50 0H68V14H50z" fill="#8f96a8"/><path d="M37 13H68V20H37z" fill="#5d6068"/><path d="M37 18L68 30V38.500H37z" fill="#5a5e66"/><path d="M40 19L68 30V36L42 22z" fill="#d9dee6"/><path d="M37 22L60 38.500H37z" fill="#4c4f56"/></g></g></svg>
<div class="x" style="left:12.0px;top:488px;font-size:7px;line-height:8.4px;color:#5a5a5a;transform:scaleX(0.899);">6</div>
<svg class="a" style="left:20px;top:486px;" width="68" height="17.5" viewBox="0 0 68 17.5"><defs><filter id="tb6"><feGaussianBlur stdDeviation="0.7"/></filter><clipPath id="tc6"><rect width="68" height="38.5"/></clipPath></defs><g clip-path="url(#tc6)"><g filter="url(#tb6)"><rect width="68" height="38.5" fill="#8c8f98"/><rect width="36" height="9" fill="#7ea4dc"/><path d="M0 8H36V14H0z" fill="#4d5563"/><path d="M0 13H36V38.500H0z" fill="#6c6f77"/><rect x="36" width="32" height="38.5" fill="#7a7c80"/><path d="M36 0H60V14H36z" fill="#d8d2b4"/><path d="M36 0H41V13H36z" fill="#5a5240"/><path d="M60 0H68V10H60z" fill="#dfe3ea"/><path d="M52 4h5v4h-5z" fill="#8a8570"/></g></g></svg>
<!-- p4_video -->
<svg class="a" style="left:851px;top:195px;" width="205" height="272" viewBox="0 0 205 272"><defs><filter id="v1" x="-5%" y="-5%" width="110%" height="110%"><feGaussianBlur stdDeviation="1.4"/></filter><filter id="v2" x="-5%" y="-5%" width="110%" height="110%"><feGaussianBlur stdDeviation="0.8"/></filter><filter id="v3" x="-10%" y="-10%" width="120%" height="120%"><feGaussianBlur stdDeviation="4"/></filter><linearGradient id="cur" x1="0" x2="1" y1="0" y2="0"><stop offset="0" stop-color="#82d0cc"/><stop offset="0.12" stop-color="#55b0b0"/><stop offset="0.3" stop-color="#7ecdc9"/><stop offset="0.45" stop-color="#52adad"/><stop offset="0.62" stop-color="#7acac6"/><stop offset="0.8" stop-color="#50aaab"/><stop offset="1" stop-color="#74c5c2"/></linearGradient><linearGradient id="hair" x1="0" x2="0" y1="0" y2="1"><stop offset="0" stop-color="#7d5f47"/><stop offset="0.45" stop-color="#a88a68"/><stop offset="1" stop-color="#c2a57e"/></linearGradient><clipPath id="vc"><rect width="205" height="272"/></clipPath></defs><g clip-path="url(#vc)"><rect width="205" height="272" fill="#f6f8f7"/><g filter="url(#v3)"><path d="M100 70L205 60V100H105z" fill="#e9efee"/><path d="M60 150H110V200H55z" fill="#eef3f2"/><path d="M150 160H205V230H170z" fill="#f0f2ef"/></g><g filter="url(#v1)"><path d="M-3 -3H68L66 60 63 130 60 172 50 178 40 198 28 234 14 275H-3z" fill="url(#cur)"/><path d="M-3 150H40L20 240 10 275H-3z" fill="#35a6b4" opacity="0.55"/><path d="M77 0L96 66" stroke="#aeb5b2" stroke-width="1" fill="none"/><path d="M95 62l4 4 7 34h-9z" fill="#57b3ae"/><path d="M105 92L195 86 197 114 126 117 118 104z" fill="#2c58c6"/><path d="M126 117L197 114 200 144 132 145z" fill="#f0e04a"/><path d="M140 96l3 18M165 94l2 19M182 91l2 22" stroke="#3f6ad6" stroke-width="1.5"/><path d="M189 212q4-5 9-4h8v20h-17z" fill="#a8aeb0"/><path d="M180 227H206V273H186z" fill="#22b4d6"/><path d="M132 172L160 176 172 196 180 230 192 275H14L28 232 40 196 50 176 70 169z" fill="#17171b"/></g><g filter="url(#v2)"><path d="M100 100c8 0 17 3 22 10 5 8 6 22 8 40l6 22 8 23 3 25-4 25-7 11-10-4-6-17-3-20-1-25-1-18-26 0-2 18 2 22-2 20-8 10-12-3-6-17 4-20 8-17 4-18 1-20c0-12 1-24 7-33 5-7 12-14 17-14z" fill="url(#hair)"/><path d="M89 158h25v18l-12 7-13-7z" fill="#a67d6c"/><path d="M83 128c0-13 8-21 18-21s18 8 18 21c0 15-5 29-18 35-13-6-18-20-18-35z" fill="#bd9483"/><path d="M83 128c0-13 8-21 18-21-6 6-10 14-10 26 0 12 3 22 10 30-13-6-18-20-18-35z" fill="#a98070"/><path d="M87 131q4-2 8 0M105 131q4-2 8 0" stroke="#5f463d" stroke-width="1.6" fill="none"/><path d="M86.500 127.500q4.500-2 9 0M104.500 127.500q4.500-2 9 0" stroke="#7d5f50" stroke-width="1" fill="none"/><path d="M96 151.500q5 1.800 10 0" stroke="#8f4f4c" stroke-width="2" fill="none"/><path d="M100 135l-1.500 9h5.500" stroke="#a98271" stroke-width="1" fill="none"/><path d="M100 101c-9 1-16 8-18 20-2 14 0 30-5 46l-10 22-5 18 5 16 11 2 8-10 2-22-2-24-2-20c-2-16 2-36 16-48z" fill="#9f7f5e"/><path d="M101 101c10 1 18 8 20 20 3 14 3 32 8 48l9 24 5 26-3 24-7 12-10-4-6-18-3-26 0-36c3-20 1-50-13-70z" fill="#b0916b"/><path d="M72 176l-8 20-3 14 6 12M132 180l8 30 1 26-5 16" stroke="#cfb288" stroke-width="2.500" fill="none" opacity="0.700"/><path d="M88 176l14 7 13-7 2 20 1 30 3 30H84l2-30z" fill="#17171b"/><path d="M92 186l8 30 13-28" stroke="#c7b49a" stroke-width="0.800" fill="none"/><path d="M99.500 214v8" stroke="#d2b3aa" stroke-width="2"/></g></g></svg>
<!-- p5_bar -->
<div class="a" style="left:0px;top:598px;width:1200.0px;height:45.3px;background:#1a1a1a;"></div>
<div class="a" style="left:0px;top:643.3px;width:1200.0px;height:1.7px;background:#ebebeb;"></div>
<svg class="a" style="left:32px;top:606px;" width="20" height="21" viewBox="0 0 20 21"><g fill="#a6a6a6"><rect x="5.800" y="1.700" width="6.4" height="11.5" rx="3.2"/><path d="M3.8 9.5v1a5.7 5.7 0 0 0 11.4 0v-1h-1.3v1a4.4 4.4 0 0 1-8.8 0v-1z"/><rect x="8.8" y="15.5" width="1.4" height="3"/><rect x="6" y="18.2" width="7" height="1.3" rx="0.6"/></g><path d="M1 19.5L18 1.2" stroke="#d8454a" stroke-width="1.2"/></svg>
<svg class="a" style="left:67px;top:614.5px;" width="7" height="5" viewBox="0 0 7 5"><path d="M0.8 3.7l2.7-2.7 2.700 2.700" fill="none" stroke="#c2c2c2" stroke-width="1.150"/></svg>
<div class="x" style="left:8.5px;top:630px;font-size:9.6px;line-height:11.5px;color:#d0d0d0;transform:scaleX(1.013);">Включить звук</div>
<svg class="a" style="left:116px;top:609px;" width="22" height="14" viewBox="0 0 22 14"><rect x="1" y="1" width="13" height="12" rx="2.8" fill="#cfcfcf"/><path d="M15 5.2L19.5 2.3q1-0.5 1 0.6v8.2q0 1.1-1 0.6L15 8.8z" fill="#cfcfcf"/></svg>
<svg class="a" style="left:159px;top:614.5px;" width="7" height="5" viewBox="0 0 7 5"><path d="M0.8 3.7l2.7-2.7 2.700 2.700" fill="none" stroke="#c2c2c2" stroke-width="1.150"/></svg>
<div class="x" style="left:86.5px;top:630px;font-size:9.6px;line-height:11.5px;color:#d0d0d0;transform:scaleX(0.969);">Остановить видео</div>
<svg class="a" style="left:362px;top:608px;" width="23" height="17" viewBox="0 0 23 17"><g fill="#c9c9c9"><circle cx="7.6" cy="4.7" r="3.2"/><path d="M2 15.6v-1.400c0-2.300 2.300-3.700 5.500-3.700s5.500 1.400 5.500 3.700v1.400z"/><circle cx="15.4" cy="5.400" r="2.700"/><path d="M14.200 15.600v-2c0-1-0.300-1.900-0.900-2.600 0.700-0.300 1.400-0.400 2.200-0.400 3 0 5.300 1.200 5.300 3.300v1.700z"/></g></svg>
<div class="x" style="left:386.5px;top:609px;font-size:9.4px;line-height:11.3px;color:#cfcfcf;transform:scaleX(1.007);">43</div>
<svg class="a" style="left:411px;top:614.5px;" width="7" height="5" viewBox="0 0 7 5"><path d="M0.8 3.7l2.7-2.7 2.700 2.700" fill="none" stroke="#c2c2c2" stroke-width="1.150"/></svg>
<div class="x" style="left:350.0px;top:630px;font-size:9.6px;line-height:11.5px;color:#d0d0d0;transform:scaleX(1.000);">Участники</div>
<svg class="a" style="left:450px;top:608px;" width="19" height="17" viewBox="0 0 19 17"><path d="M4 1h11a3 3 0 0 1 3 3v5.5a3 3 0 0 1-3 3H8.5L4.3 16.2V12.5H4a3 3 0 0 1-3-3V4a3 3 0 0 1 3-3z" fill="#cfcfcf"/></svg>
<svg class="a" style="left:482px;top:614.5px;" width="7" height="5" viewBox="0 0 7 5"><path d="M0.8 3.7l2.7-2.7 2.700 2.700" fill="none" stroke="#c2c2c2" stroke-width="1.150"/></svg>
<div class="x" style="left:452.0px;top:630px;font-size:9.6px;line-height:11.5px;color:#d0d0d0;transform:scaleX(0.971);">Чат</div>
<svg class="a" style="left:541px;top:609px;" width="18" height="14" viewBox="0 0 18 14"><rect x="0" y="0" width="18" height="14" rx="2.5" fill="#2edb5f"/><path d="M9 3.2L5.6 6.8h2.5v4h1.8v-4h2.5z" fill="#14321f"/></svg>
<div class="x" style="left:501.0px;top:630px;font-size:9.6px;line-height:11.5px;color:#2edb5f;transform:scaleX(0.935);font-weight:bold;">Демонстрация экрана</div>
<svg class="a" style="left:628px;top:607.5px;" width="17" height="17" viewBox="0 0 17 17"><circle cx="8.5" cy="8.5" r="7.3" fill="none" stroke="#d4d4d4" stroke-width="1.2"/><circle cx="8.5" cy="8.5" r="5.2" fill="#c9c9c9"/></svg>
<div class="x" style="left:621.0px;top:630px;font-size:9.6px;line-height:11.5px;color:#d0d0d0;transform:scaleX(0.982);">Запись</div>
<svg class="a" style="left:691px;top:606px;" width="20" height="18" viewBox="0 0 20 18"><circle cx="8" cy="10.5" r="6.6" fill="#cfcfcf"/><circle cx="5.8" cy="9" r="1" fill="#1a1a1a"/><circle cx="10.2" cy="9" r="1" fill="#1a1a1a"/><path d="M4.8 12c1.6 2.4 4.8 2.4 6.4 0z" fill="#1a1a1a"/><circle cx="15.3" cy="3.6" r="3.6" fill="#1a1a1a"/><path d="M15.3 0.8v5.6M12.5 3.6h5.6" stroke="#cfcfcf" stroke-width="1.3"/></svg>
<svg class="a" style="left:717px;top:615.5px;" width="7" height="5" viewBox="0 0 7 5"><path d="M0.8 3.7l2.7-2.7 2.700 2.700" fill="none" stroke="#c2c2c2" stroke-width="1.150"/></svg>
<div class="x" style="left:681.0px;top:630px;font-size:9.6px;line-height:11.5px;color:#d0d0d0;transform:scaleX(0.982);">Реакции</div>
<svg class="a" style="left:758.8px;top:610px;" width="14.5" height="14.5" viewBox="0 0 16 16"><g fill="none" stroke="#cfcfcf" stroke-width="1.4"><path d="M1.5 6V3.8a2.3 2.3 0 0 1 2.3-2.3H7"/><path d="M14 9v2.7a2.3 2.3 0 0 1-2.3 2.3H8.5"/><circle cx="11.7" cy="3.3" r="2"/><circle cx="3.5" cy="11.7" r="2"/></g></svg>
<div class="x" style="left:737.0px;top:630px;font-size:9.6px;line-height:11.5px;color:#d0d0d0;transform:scaleX(1.012);">Приложения</div>
<svg class="a" style="left:839px;top:608px;" width="18" height="16" viewBox="0 0 18 16"><rect x="1.2" y="1.2" width="14.6" height="11" rx="1.6" fill="none" stroke="#cfcfcf" stroke-width="1.4"/><rect x="8" y="10.2" width="9" height="3.4" rx="1.5" fill="#1a1a1a"/><rect x="8.8" y="10.9" width="7.6" height="2" rx="1" fill="#cfcfcf"/></svg>
<div class="x" style="left:807.0px;top:630px;font-size:9.6px;line-height:11.5px;color:#d0d0d0;transform:scaleX(1.020);">Доски сообщений</div>
<svg class="a" style="left:926px;top:608px;" width="15" height="17" viewBox="0 0 15 17"><rect x="1.7" y="1" width="10.6" height="14" rx="1.6" fill="none" stroke="#cfcfcf" stroke-width="1.3"/><path d="M1.7 4v9" stroke="#cfcfcf" stroke-width="2"/><path d="M4.8 4.8h5M4.8 7h5M4.8 9.2h3" stroke="#cfcfcf" stroke-width="1"/><rect x="5.5" y="12.3" width="8.5" height="3.6" rx="1.5" fill="#1a1a1a"/><rect x="6.3" y="13" width="7" height="2.2" rx="1" fill="#cfcfcf"/></svg>
<div class="x" style="left:905.0px;top:630px;font-size:9.6px;line-height:11.5px;color:#d0d0d0;transform:scaleX(1.008);">Примечания</div>
<div class="a" style="left:1142px;top:612px;width:49.0px;height:22.0px;background:#d3232b;border-radius:5px;"></div>
<div class="x" style="left:1152.0px;top:618px;font-size:10px;line-height:12.0px;color:#ffffff;transform:scaleX(0.865);font-weight:bold;">Выйти</div>
</div>
</body></html>
